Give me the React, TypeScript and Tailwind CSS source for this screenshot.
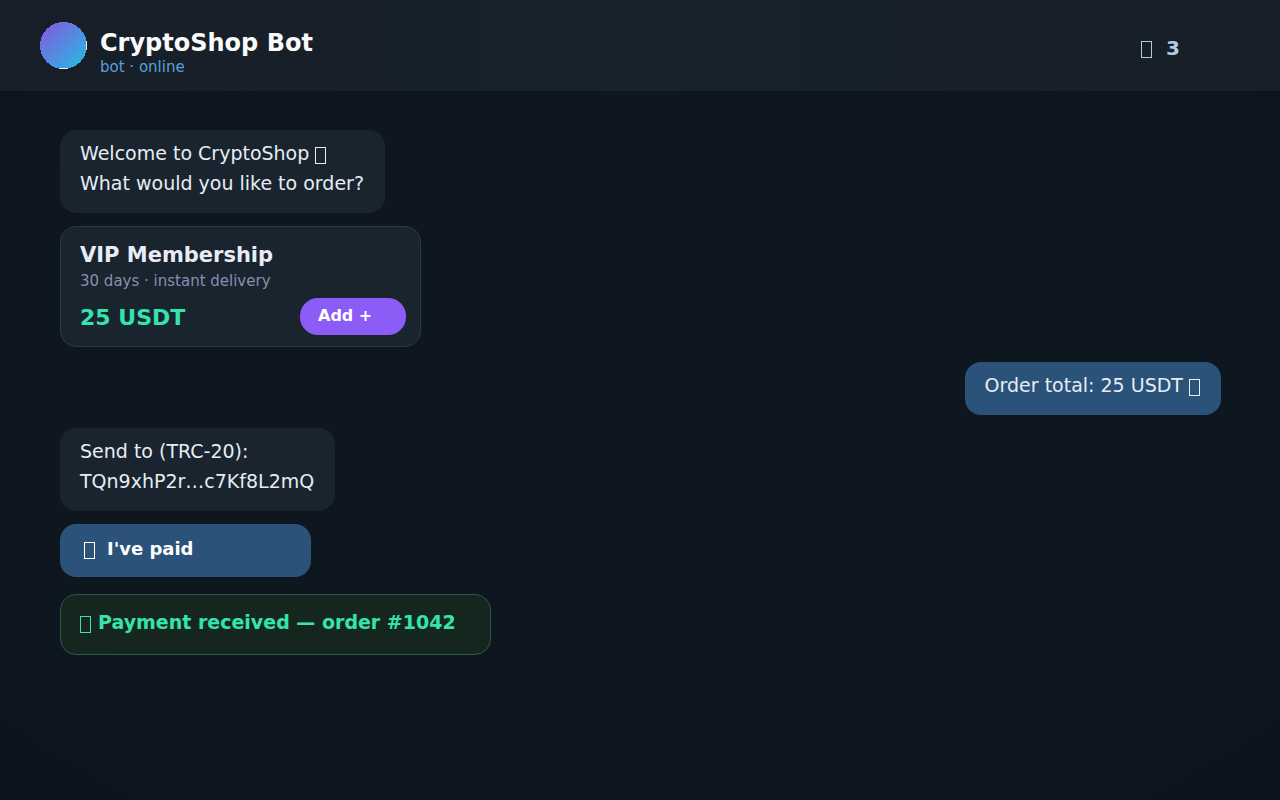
import React from 'react';

// Outlined box standing in for an emoji
const Glyph: React.FC<{ className?: string }> = ({ className = '' }) => (
    <span aria-hidden="true" className={`inline-block h-[17px] w-[11px] shrink-0 border border-current ${className}`}></span>
);

const Avatar: React.FC = () => (
    <svg width="47" height="47" viewBox="0 0 47 47" className="shrink-0" shapeRendering="crispEdges" aria-hidden="true">
        <defs>
            <linearGradient id="avatar" x1="0" y1="0" x2="1" y2="1">
                <stop offset="0" stopColor="#8b5cf0" />
                <stop offset="0.1" stopColor="#7c60e0" />
                <stop offset="0.9" stopColor="#2cb4e0" />
                <stop offset="1" stopColor="#22c0e4" />
            </linearGradient>
        </defs>
        <circle cx="23.5" cy="23.5" r="23.5" fill="url(#avatar)" />
        <path d="M46 19h1v9h-1zM19 46h9v1h-9z" fill="#f0f4f8" />
    </svg>
);

interface BubbleProps {
    outgoing?: boolean;
    children: React.ReactNode;
}

const Bubble: React.FC<BubbleProps> = ({ outgoing, children }) => (
    <div
        className={`rounded-2xl pt-2 pr-[21px] pb-[15px] pl-5 text-[19px] leading-[30px] text-[#e6edf3] ${
            outgoing ? 'self-end bg-[#2b5278]' : 'bg-[#19242f]'
        }`}
    >
        {children}
    </div>
);

const ProductCard: React.FC = () => (
    <article className="mb-0.5 w-[361px] rounded-2xl border border-[#2b3945] bg-[#19242f] pt-[13px] pr-[14px] pb-[11px] pl-[19px]">
        <h2 className="text-[21px] leading-[30px] font-bold text-[#e8ecf4]">VIP Membership</h2>
        <p className="text-[15px] leading-[22px] text-[#8490ad]">30 days · instant delivery</p>
        <div className="mt-[6px] flex items-center justify-between">
            <span className="pt-[2px] text-[22px] leading-[35px] font-bold text-[#34e4ac]">25 USDT</span>
            <button className="h-[37px] w-[106px] rounded-[18px] bg-[#8b5cf6] pb-[2px] pl-[18px] text-left text-[16px] font-bold text-white">
                Add +
            </button>
        </div>
    </article>
);

const App: React.FC = () => {
    return (
        <div className="min-h-screen bg-[#0e1620] bg-radial from-[#0e1620] from-70% to-[#0c131c] font-['DejaVu_Sans',sans-serif]">
            <header className="flex h-[91px] items-center justify-between bg-[#17212a] bg-linear-to-r from-[#171e27] via-[#17222b] to-[#171e27] pr-[100px] pl-10">
                <div className="flex items-center gap-[13px]">
                    <Avatar />
                    <div className="pt-3">
                        <h1 className="text-[24px] leading-[30px] font-bold text-[#fafafa]">CryptoShop Bot</h1>
                        <p className="text-[15px] leading-[18px] text-[#5a9fd8]">bot · online</p>
                    </div>
                </div>
                <div className="flex items-center gap-[14px] pt-1 text-[20px] font-bold text-[#b4cae0]">
                    <Glyph className="mt-[3px]" />
                    <span>3</span>
                </div>
            </header>

            <main className="flex flex-col items-start gap-[13px] pt-[39px] pr-[59px] pb-10 pl-[60px]">
                <Bubble>
                    Welcome to CryptoShop <Glyph className="align-[-4px]" />
                    <br />
                    What would you like to order?
                </Bubble>
                <ProductCard />
                <Bubble outgoing>
                    Order total: 25 USDT <Glyph className="align-[-4px]" />
                </Bubble>
                <Bubble>
                    Send to (TRC-20):
                    <br />
                    TQn9xhP2r…c7Kf8L2mQ
                </Bubble>
                <button className="flex h-[53px] w-[251px] items-center gap-3 rounded-2xl bg-[#2b5278] pb-1 pl-6 text-left text-[18px] font-bold text-white">
                    <Glyph className="mt-[3px]" />
                    I've paid
                </button>
                <div className="mt-1 flex h-[61px] w-[431px] items-center gap-[7px] rounded-2xl border border-[#265a48] bg-[#15261f] pb-1 pl-[19px] text-[19px] font-bold text-[#34e4ac]">
                    <Glyph className="mt-[3px]" />
                    Payment received — order #1042
                </div>
            </main>
        </div>
    );
};

export default App;
